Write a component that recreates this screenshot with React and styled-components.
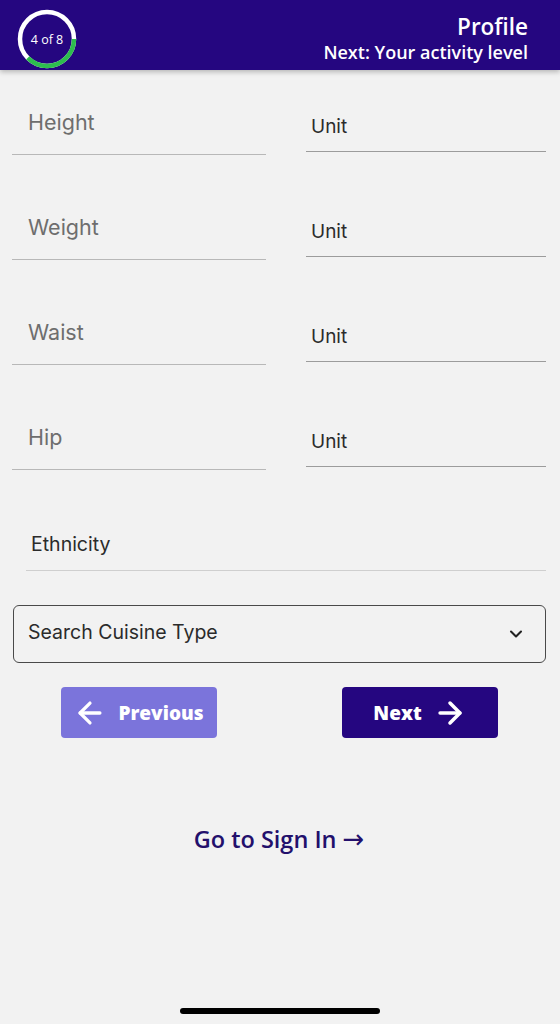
import React from "react";
import styled, { createGlobalStyle } from "styled-components";
import { ArrowLeft, ArrowRight, ChevronDown } from "lucide-react";

const GlobalStyle = createGlobalStyle`
  html, body {
    margin: 0;
    padding: 0;
    background: #f2f2f2;
  }
  * { box-sizing: border-box; }
`;

const Screen = styled.div`
  width: 560px;
  min-height: 1024px;
  background: #f2f2f2;
  display: flex;
  flex-direction: column;
  font-family: Inter, "Liberation Sans", sans-serif;
`;

const Header = styled.header`
  height: 70px;
  background: #250680;
  box-shadow: 0 2px 5px rgba(0, 0, 0, 0.25);
  display: flex;
  align-items: center;
  justify-content: space-between;
  padding: 0 32px 0 17px;
  color: #fff;
  font-family: "Open Sans", "Liberation Sans", sans-serif;
`;

const Ring = styled.div`
  position: relative;
  width: 60px;
  height: 60px;
  margin-top: 8px;

  span {
    position: absolute;
    inset: 0;
    display: flex;
    align-items: center;
    justify-content: center;
    font-size: 12.5px;
    font-family: "Open Sans", sans-serif;
  }
`;

const Titles = styled.div`
  text-align: right;
  margin-top: 6px;

  h1 {
    margin: 0;
    font-size: 22.5px;
    font-weight: 600;
    line-height: 28px;
  }
  p {
    margin: 0;
    font-size: 18px;
    font-weight: 600;
    line-height: 22px;
  }
`;

const Form = styled.div`
  padding: 40px 14px 0 12px;
  display: flex;
  flex-direction: column;
`;

const Row = styled.div`
  display: grid;
  grid-template-columns: 254px 240px;
  justify-content: space-between;
  align-items: end;
  margin-bottom: 60px;
`;

const Field = styled.div`
  border-bottom: 1.5px solid ${(p) => (p.$unit ? "#9c9c9c" : "#b8b8b8")};
  line-height: 24px;
  padding: ${(p) => (p.$unit ? "0 0 12px 5px" : "0 0 20px 16px")};
  margin-bottom: ${(p) => (p.$unit ? "3px" : "0")};
  font-size: ${(p) => (p.$unit ? "19px" : "21.5px")};
  color: ${(p) => (p.$unit ? "#2b2b2b" : "#6e6e6e")};
`;

const Ethnicity = styled.div`
  margin: 2px 0 34px 14px;
  border-bottom: 1.5px solid #cfcfcf;
  padding: 0 0 14px 5px;
  line-height: 24px;
  font-size: 19.5px;
  color: #2b2b2b;
`;

const Select = styled.div`
  margin-left: 1px;
  height: 58px;
  border: 1px solid #4a4a4a;
  border-radius: 6px;
  display: flex;
  align-items: center;
  justify-content: space-between;
  padding: 0 19px 5px 14px;
  font-size: 19.5px;
  color: #2b2b2b;

  svg {
    margin-top: 4px;
  }
`;

const Actions = styled.div`
  display: grid;
  grid-template-columns: 1fr 1fr;
  margin: 24px -14px 0 -12px;
  justify-items: center;
`;

const Button = styled.button`
  width: 156px;
  height: 51px;
  border: none;
  border-radius: 4px;
  background: ${(p) => (p.$primary ? "#250680" : "#7b74db")};
  color: #fff;
  font-family: "Open Sans", "Liberation Sans", sans-serif;
  font-weight: 800;
  font-size: 19px;
  display: flex;
  align-items: center;
  justify-content: center;
  gap: 11px;
  padding: 0;
  margin-left: ${(p) => (p.$primary ? "0" : "-3px")};
`;

const SignIn = styled.a`
  margin-top: 86px;
  text-align: center;
  font-family: "Open Sans", "Liberation Sans", sans-serif;
  font-weight: 600;
  font-size: 23.5px;
  line-height: 30px;
  color: #23106c;
  text-decoration: none;
`;

const Arrow = styled.span`
  font-family: "DejaVu Sans", sans-serif;
  font-weight: 400;
  font-size: 26px;
  margin-left: 6px;
`;

const HomeBar = styled.div`
  margin: auto auto 10px;
  width: 200px;
  height: 6px;
  border-radius: 3px;
  background: #000;
`;

const measures = ["Height", "Weight", "Waist", "Hip"];

function ProgressRing() {
  const r = 27;
  const c = 2 * Math.PI * r;
  const done = c * (135 / 360);
  return (
    <Ring>
      <svg width="60" height="60" viewBox="0 0 60 60">
        <circle cx="30" cy="30" r={r} fill="none" stroke="#fff" strokeWidth="4.5" />
        <circle
          cx="30"
          cy="30"
          r={r}
          fill="none"
          stroke="#2dbd4e"
          strokeWidth="4.5"
          strokeDasharray={`${done} ${c}`}
        />
      </svg>
      <span>4 of 8</span>
    </Ring>
  );
}

export default function App() {
  return (
    <>
      <GlobalStyle />
      <Screen>
        <Header>
          <ProgressRing />
          <Titles>
            <h1>Profile</h1>
            <p>Next: Your activity level</p>
          </Titles>
        </Header>

        <Form>
          {measures.map((m) => (
            <Row key={m}>
              <Field>{m}</Field>
              <Field $unit>Unit</Field>
            </Row>
          ))}
          <Ethnicity>Ethnicity</Ethnicity>
          <Select>
            <span>Search Cuisine Type</span>
            <ChevronDown size={20} strokeWidth={2.5} color="#222" />
          </Select>
          <Actions>
            <Button>
              <ArrowLeft size={34} strokeWidth={2.3} />
              Previous
            </Button>
            <Button $primary>
              Next
              <ArrowRight size={34} strokeWidth={2.5} />
            </Button>
          </Actions>
          <SignIn href="#">
            Go to Sign In<Arrow>→</Arrow>
          </SignIn>
        </Form>
        <HomeBar />
      </Screen>
    </>
  );
}
